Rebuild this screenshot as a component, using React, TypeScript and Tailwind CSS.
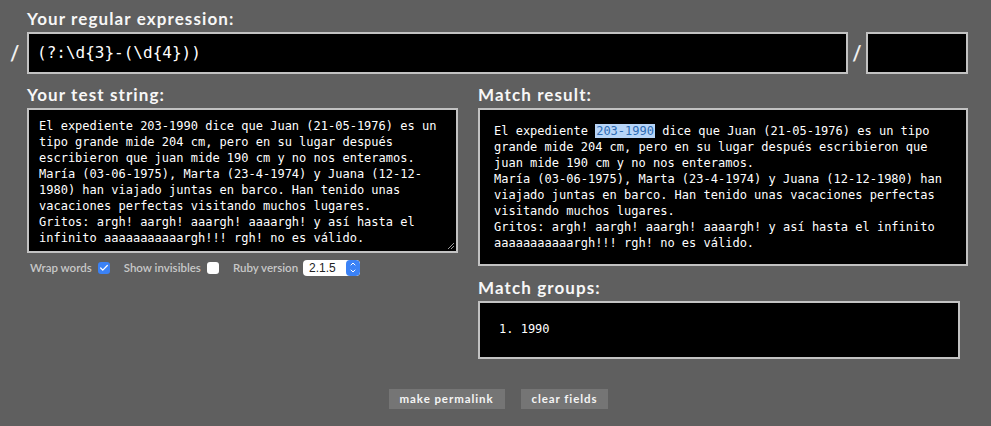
import { Check, ChevronDown, ChevronUp } from "lucide-react";

const heading = "font-['Lato',sans-serif] text-[17px] font-bold leading-[22px] tracking-[0.065em] text-[#f7f7f7]";
const mono = "font-['DejaVu_Sans_Mono',monospace]";
const box = "border-2 border-[#c2c2c2] bg-black";

const testLines = [
  "El expediente 203-1990 dice que Juan (21-05-1976) es un",
  "tipo grande mide 204 cm, pero en su lugar después",
  "escribieron que juan mide 190 cm y no nos enteramos.",
  "María (03-06-1975), Marta (23-4-1974) y Juana (12-12-",
  "1980) han viajado juntas en barco. Han tenido unas",
  "vacaciones perfectas visitando muchos lugares.",
  "Gritos: argh! aargh! aaargh! aaaargh! y así hasta el",
  "infinito aaaaaaaaaaargh!!! rgh! no es válido.",
];

const resultLines = [
  "grande mide 204 cm, pero en su lugar después escribieron que",
  "juan mide 190 cm y no nos enteramos.",
  "María (03-06-1975), Marta (23-4-1974) y Juana (12-12-1980) han",
  "viajado juntas en barco. Han tenido unas vacaciones perfectas",
  "visitando muchos lugares.",
  "Gritos: argh! aargh! aaargh! aaaargh! y así hasta el infinito",
  "aaaaaaaaaaargh!!! rgh! no es válido.",
];

function Slash() {
  return <span className="font-['Lato',sans-serif] text-[20px] font-bold text-[#f0f0f0]">/</span>;
}

export default function App() {
  return (
    <div className="h-[426px] w-[991px] bg-[#5f5f5f] pt-[8px]">
      {/* regex */}
      <div className="pl-[27px]">
        <h2 className={heading}>Your regular expression:</h2>
      </div>
      <div className="mt-[2px] flex items-center pr-[23px] pl-[10px]">
        <div className="w-[17px]"><Slash /></div>
        <div className={`${box} flex h-[42px] flex-1 items-center px-[8px]`}>
          <span className={`${mono} text-[16px] text-white`}>(?:\d{"{"}3{"}"}-(\d{"{"}4{"}"}))</span>
        </div>
        <div className="flex w-[18px] justify-center"><Slash /></div>
        <div className={`${box} h-[42px] w-[102px]`} />
      </div>

      <div className="mt-[10px] flex gap-[20px] pl-[27px] pr-[23px]">
        {/* left column */}
        <div className="w-[431px]">
          <h2 className={heading}>Your test string:</h2>
          <div className={`${box} relative mt-[2px] h-[145px] px-[10px] pt-[8px]`}>
            {testLines.map((l, i) => (
              <div key={i} className={`${mono} whitespace-pre text-[12px] leading-[16px] text-white`}>{l}</div>
            ))}
            <svg className="absolute right-[1px] bottom-[1px]" width="8" height="8" viewBox="0 0 8 8">
              <path d="M7 1 L1 7 M7 4 L4 7" stroke="#9a9a9a" strokeWidth="1" />
            </svg>
          </div>
          <div className="mt-[6px] flex items-center pl-[3px] font-['Lato',sans-serif] text-[11.5px] font-semibold text-[#c8c8c8]">
            <span>Wrap words</span>
            <span className="ml-[6px] flex h-[12px] w-[12px] items-center justify-center rounded-[3px] bg-[#3b82f6]">
              <Check size={10} strokeWidth={3} className="text-white" />
            </span>
            <span className="ml-[14px]">Show invisibles</span>
            <span className="ml-[6px] h-[12px] w-[12px] rounded-[3px] bg-white" />
            <span className="ml-[14px]">Ruby version</span>
            <div className="ml-[5px] flex h-[16px] w-[57px] items-center overflow-hidden rounded-[4px] bg-white">
              <span className="flex-1 pl-[6px] font-['Liberation_Sans',sans-serif] text-[12px] font-normal text-[#222]">2.1.5</span>
              <span className="flex h-full w-[14px] flex-col items-center justify-center rounded-[4px] bg-[#3b82f6]">
                <ChevronUp size={8} strokeWidth={3} className="-mb-[1px] text-white" />
                <ChevronDown size={8} strokeWidth={3} className="text-white" />
              </span>
            </div>
          </div>
        </div>

        {/* right column */}
        <div className="flex-1">
          <h2 className={heading}>Match result:</h2>
          <div className={`${box} mt-[2px] h-[158px] pl-[14px] pt-[13px]`}>
            <div className={`${mono} whitespace-pre text-[12px] leading-[16px] text-white`}>
              El expediente <span className="bg-[#b7d5f8] px-[1px] text-[#2d6bb3]">203-1990</span> dice que Juan (21-05-1976) es un tipo
            </div>
            {resultLines.map((l, i) => (
              <div key={i} className={`${mono} whitespace-pre text-[12px] leading-[16px] text-white`}>{l}</div>
            ))}
          </div>

          <h2 className={`${heading} mt-[11px]`}>Match groups:</h2>
          <div className={`${box} mt-[2px] h-[58px] w-[482px] pl-[19px] pt-[18px]`}>
            <ol className={`${mono} text-[12px] leading-[16px] text-white`}>
              <li>1. 1990</li>
            </ol>
          </div>
        </div>
      </div>

      {/* buttons */}
      <div className="mt-[30px] flex justify-center gap-[16px] pl-[6px]">
        <button className="h-[20px] bg-[#757575] px-[11px] font-['Lato',sans-serif] text-[11.5px] font-bold tracking-[0.08em] text-[#f4f4f4]">
          make permalink
        </button>
        <button className="h-[20px] bg-[#757575] px-[11px] font-['Lato',sans-serif] text-[11.5px] font-bold tracking-[0.08em] text-[#f4f4f4]">
          clear fields
        </button>
      </div>
    </div>
  );
}
